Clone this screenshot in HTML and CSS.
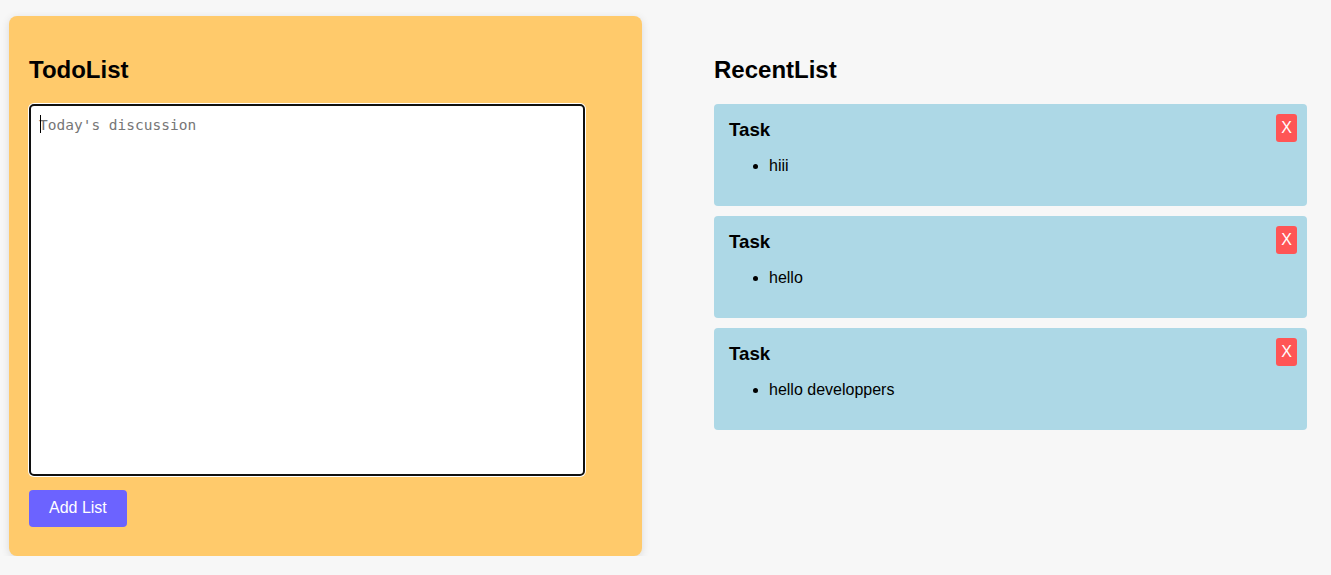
FILE: index.html
```html
<!DOCTYPE html>
<html lang="en">
<head>
<meta charset="utf-8">
<title>TodoList</title>
<link rel="stylesheet" href="styles.css">
</head>
<body>
<div class="app">
  <section class="todo-panel">
    <h2 class="title">TodoList</h2>
    <div class="editor">
      <textarea class="todo-input" placeholder="Today's discussion"></textarea>
      <span class="caret"></span>
    </div>
    <button class="add-btn">Add List</button>
  </section>
  <section class="recent">
    <h2 class="title">RecentList</h2>
    <div class="cards">
      <div class="card">
        <h3 class="card-title">Task</h3>
        <button class="close-btn">X</button>
        <ul class="card-list"><li>hiii</li></ul>
      </div>
      <div class="card">
        <h3 class="card-title">Task</h3>
        <button class="close-btn">X</button>
        <ul class="card-list"><li>hello</li></ul>
      </div>
      <div class="card">
        <h3 class="card-title">Task</h3>
        <button class="close-btn">X</button>
        <ul class="card-list"><li>hello developpers</li></ul>
      </div>
    </div>
  </section>
</div>
</body>
</html>
```

FILE: styles.css
```css
html, body {
  margin: 0;
  padding: 0;
}
body {
  background: #f7f7f7;
  font-family: "Liberation Sans", Arial, sans-serif;
  color: #000;
}
.app {
  display: flex;
  align-items: flex-start;
  gap: 52px;
  padding: 16px 4px 0 9px;
}
.todo-panel {
  width: 633px;
  box-sizing: border-box;
  padding: 20px 20px 29px;
  background: #ffca6b;
  border-radius: 8px;
  box-shadow: 0 2px 8px rgba(0, 0, 0, 0.12);
  display: flex;
  flex-direction: column;
  align-items: flex-start;
}
.title {
  font-size: 24px;
  font-weight: bold;
  margin: 20px 0 20px;
  line-height: 27.6px;
}
.editor {
  position: relative;
  width: 556px;
  height: 372px;
}
.todo-input {
  display: block;
  box-sizing: border-box;
  width: 556px;
  height: 372px;
  margin: 0;
  padding: 10px 8px 9px;
  border: 2px solid #101010;
  border-radius: 5px;
  box-shadow: 0 0 0 1px #ffffff;
  background: #fff;
  font-family: "DejaVu Sans Mono", monospace;
  font-size: 14.5px;
  line-height: 18px;
  resize: none;
  outline: none;
}
.todo-input::placeholder {
  color: #767676;
}
.caret {
  position: absolute;
  left: 11px;
  top: 11px;
  width: 1px;
  height: 18px;
  background: #000;
}
.add-btn {
  margin-top: 14px;
  padding: 9px 20px 10px;
  border: none;
  border-radius: 4px;
  background: #6c63ff;
  color: #fff;
  font-family: "Liberation Sans", Arial, sans-serif;
  font-size: 16px;
  line-height: 18px;
}
.recent {
  width: 633px;
  box-sizing: border-box;
  padding: 20px;
}
.cards {
  display: flex;
  flex-direction: column;
  gap: 10px;
}
.card {
  position: relative;
  background: #add8e6;
  border-radius: 4px;
  padding: 15px;
}
.card-title {
  margin: 0;
  font-size: 18.72px;
  font-weight: bold;
  line-height: 22px;
}
.card-list {
  margin: 16px 0;
  padding-left: 40px;
  font-size: 16px;
  line-height: 18px;
}
.close-btn {
  position: absolute;
  top: 10px;
  right: 10px;
  padding: 5px;
  border: none;
  border-radius: 3px;
  background: #ff5555;
  color: #fff;
  font-family: "Liberation Sans", Arial, sans-serif;
  font-size: 16px;
  line-height: 18px;
}
```
